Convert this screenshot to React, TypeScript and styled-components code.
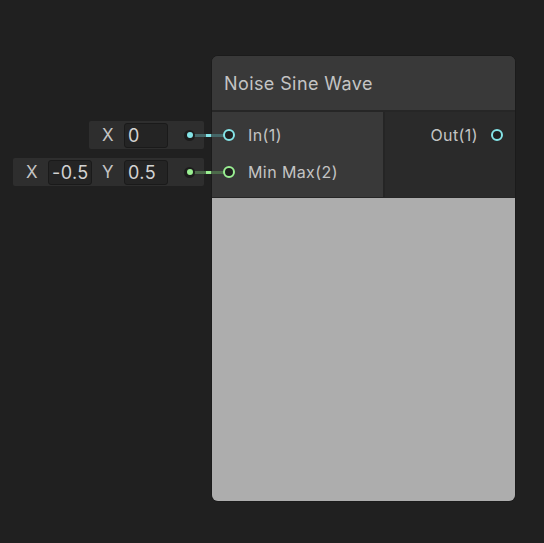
import React from "react";
import styled, { createGlobalStyle } from "styled-components";

const Global = createGlobalStyle`
  html, body { margin: 0; padding: 0; background: #202020; }
  body { font-family: Inter, "Noto Sans", sans-serif; }
`;

const Canvas = styled.div`
  position: relative;
  width: 544px;
  height: 543px;
  background: #202020;
  overflow: hidden;
`;

const Node = styled.div`
  position: absolute;
  left: 211px;
  top: 55px;
  width: 305px;
  height: 447px;
  display: flex;
  flex-direction: column;
  border: 1px solid #1b1b1b;
  border-radius: 7px;
  box-sizing: border-box;
  background: #393939;
`;

const Header = styled.div`
  height: 54px;
  display: flex;
  align-items: center;
  padding-left: 12px;
  font-size: 18px;
  letter-spacing: 0.4px;
  color: #c4c4c4;
  background: #393939;
  border-radius: 6px 6px 0 0;
  border-bottom: 2px solid #262626;
`;

const Ports = styled.div`
  display: flex;
  height: 85px;
  border-bottom: 1px solid #262626;
`;

const InputColumn = styled.div`
  width: 171px;
  background: #393939;
  border-right: 2px solid #252525;
  display: flex;
  flex-direction: column;
  padding-top: 9px;
  gap: 9px;
`;

const OutputColumn = styled.div`
  flex: 1;
  background: #2a2a2a;
  display: flex;
  flex-direction: column;
  align-items: flex-end;
  padding-top: 9px;
`;

const PortRow = styled.div<{ $out?: boolean }>`
  position: relative;
  height: 28px;
  display: flex;
  align-items: center;
  gap: 13px;
  padding: ${(p) => (p.$out ? "0 12px 0 0" : "0 0 0 11px")};
  font-size: 16px;
  letter-spacing: 0.4px;
  color: #c4c4c4;
`;

const PortCircle = styled.div<{ $c: string }>`
  width: 12px;
  height: 12px;
  box-sizing: border-box;
  border-radius: 50%;
  border: 2px solid ${(p) => p.$c};
  background: #202020;
  flex: none;
  position: relative;
  z-index: 2;
`;

const Edge = styled.div<{ $c: string; $dim: string }>`
  position: absolute;
  left: -24px;
  width: 36px;
  top: 50%;
  height: 3px;
  margin-top: -1px;
  background: ${(p) => p.$dim};
  z-index: 1;
  &::after {
    content: "";
    position: absolute;
    left: 18px;
    width: 5px;
    top: 0;
    height: 3px;
    background: ${(p) => p.$c};
  }
`;

const Attached = styled.div`
  position: absolute;
  right: calc(100% + 8px);
  top: 0;
  height: 28px;
  display: flex;
  align-items: center;
  background: #2e2e2e;
  border-radius: 2px;
  padding: 0 9px 0 3px;
  white-space: nowrap;
`;

const Field = styled.div`
  display: flex;
  align-items: center;
`;

const FieldLabel = styled.span`
  font-size: 17px;
  color: #c4c4c4;
  padding: 0 10px;
`;

const FieldInput = styled.div`
  width: 44px;
  height: 25px;
  box-sizing: border-box;
  background: #242424;
  border: 1px solid #1a1a1a;
  border-radius: 3px;
  display: flex;
  align-items: center;
  padding-left: 3px;
  font-size: 18px;
  color: #d2d2d2;
  overflow: hidden;
`;

const Dot = styled.div<{ $c: string }>`
  width: 11px;
  height: 11px;
  border-radius: 50%;
  background: #1c1c1c;
  margin-left: 16px;
  display: flex;
  align-items: center;
  justify-content: center;
  position: relative;
  z-index: 2;
  &::after {
    content: "";
    width: 6px;
    height: 6px;
    border-radius: 50%;
    background: ${(p) => p.$c};
  }
`;

const Preview = styled.div`
  flex: 1;
  background: #adadad;
  border-radius: 0 0 6px 6px;
`;

const CYAN = "#84e4e7";
const GREEN = "#9aef92";

export default function App() {
  return (
    <>
      <Global />
      <Canvas>
        <Node>
          <Header>Noise Sine Wave</Header>
          <Ports>
            <InputColumn>
              <PortRow>
                <Attached>
                  <Field>
                    <FieldLabel>X</FieldLabel>
                    <FieldInput>0</FieldInput>
                  </Field>
                  <Dot $c={CYAN} />
                </Attached>
                <Edge $c={CYAN} $dim="#456768" />
                <PortCircle $c={CYAN} />
                <span>In(1)</span>
              </PortRow>
              <PortRow>
                <Attached>
                  <Field>
                    <FieldLabel>X</FieldLabel>
                    <FieldInput>-0.5</FieldInput>
                  </Field>
                  <Field>
                    <FieldLabel>Y</FieldLabel>
                    <FieldInput>0.5</FieldInput>
                  </Field>
                  <Dot $c={GREEN} />
                </Attached>
                <Edge $c={GREEN} $dim="#4c6a4a" />
                <PortCircle $c={GREEN} />
                <span>Min Max(2)</span>
              </PortRow>
            </InputColumn>
            <OutputColumn>
              <PortRow $out>
                <span>Out(1)</span>
                <PortCircle $c={CYAN} />
              </PortRow>
            </OutputColumn>
          </Ports>
          <Preview />
        </Node>
      </Canvas>
    </>
  );
}
